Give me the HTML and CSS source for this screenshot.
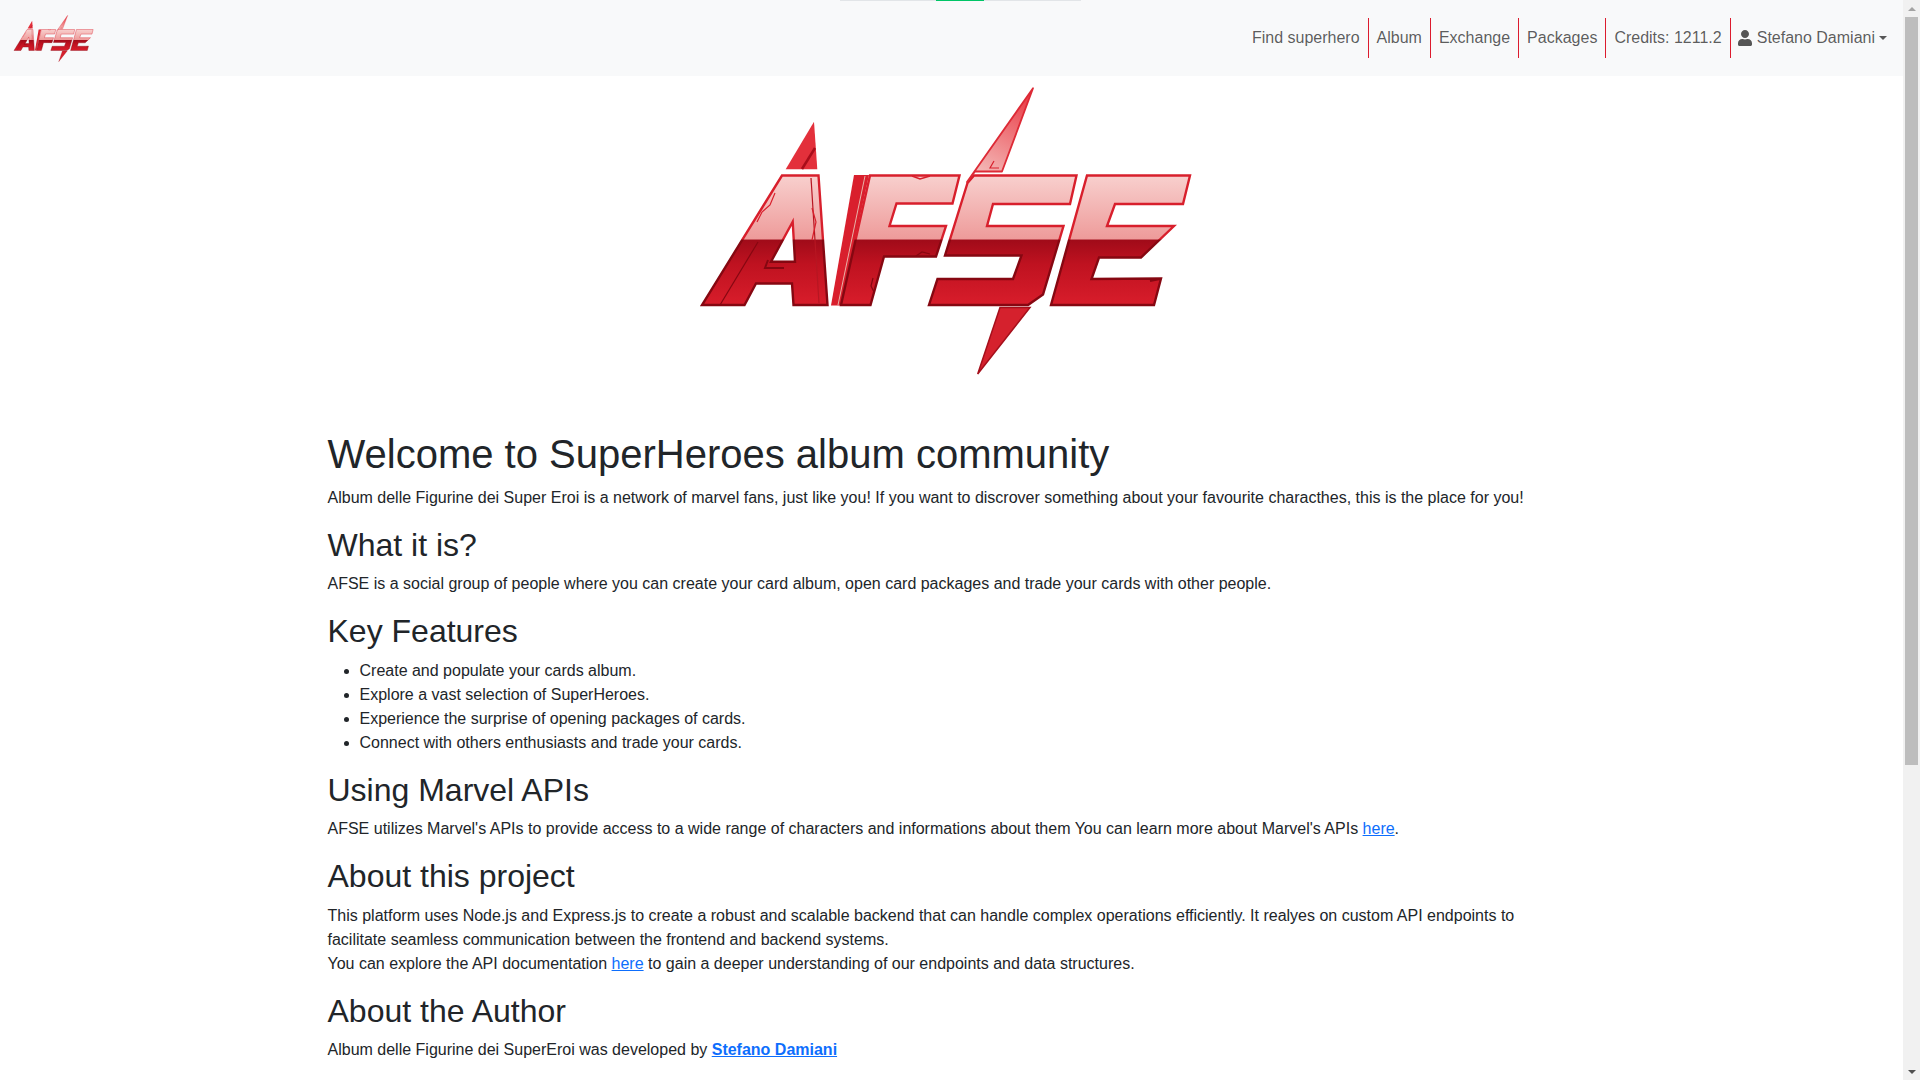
FILE: index.html
```html
<!DOCTYPE html>
<html lang="en">
<head>
<meta charset="utf-8">
<title>AFSE</title>
<link rel="stylesheet" href="styles.css">
</head>
<body>
<svg class="defs" width="0" height="0" aria-hidden="true">
  <defs>
    <linearGradient id="lf" gradientUnits="userSpaceOnUse" x1="0" y1="175" x2="0" y2="306">
      <stop offset="0" stop-color="#f8d0ce"/>
      <stop offset="0.49" stop-color="#ee9b9a"/>
      <stop offset="0.495" stop-color="#a00b19"/>
      <stop offset="0.68" stop-color="#bf1220"/>
      <stop offset="1" stop-color="#d91d2b"/>
    </linearGradient>
    <linearGradient id="ls" gradientUnits="userSpaceOnUse" x1="0" y1="175" x2="0" y2="306">
      <stop offset="0" stop-color="#d81f2c"/>
      <stop offset="0.49" stop-color="#d81f2c"/>
      <stop offset="0.495" stop-color="#860711"/>
      <stop offset="1" stop-color="#860711"/>
    </linearGradient>
    <linearGradient id="lb" gradientUnits="userSpaceOnUse" x1="1030" y1="90" x2="985" y2="172">
      <stop offset="0" stop-color="#e9343f"/>
      <stop offset="1" stop-color="#f3b4b3"/>
    </linearGradient>
    <symbol id="afse" viewBox="698 86 495 290">
      <polygon points="814,121.7 817.3,169.3 785.7,169.3" fill="#e3303b"/>
      <line x1="815" y1="148" x2="802" y2="169" stroke="#a80d1a" stroke-width="2.5"/>
      <path d="M782 175.500H818.500L827.500 305H793.500L792 283.500H756L744.500 305H702ZM792.700 221.700L771 261.700H795Z" fill="url(#lf)" fill-rule="evenodd" stroke="url(#ls)" stroke-width="2.400"/>
      <polygon points="854,175 869,175 841,305.500 831,305.500" fill="#d91f2d"/>
      <line x1="865" y1="176" x2="838" y2="305" stroke="#e7b3a8" stroke-width="1"/>
      <polygon points="870,175.500 959.500,175.500 952.500,203.500 896.500,203.500 889.500,226 946,226 936,256.500 884,256.500 870.500,305 841,305" fill="url(#lf)" stroke="url(#ls)" stroke-width="2.400"/>
      <polygon points="974,175.500 1076.500,175.500 1070,204 993,204 987,226 1063.500,226 1043,294.500 1028,305 929,305 937.500,279 1013,279 1021.500,255.500 945,255.500 967.500,183" fill="url(#lf)" stroke="url(#ls)" stroke-width="2.400"/>
      <polygon points="1087,175.500 1190,175.500 1183,204 1115,204 1107,226 1174,226 1141,257.500 1099,257.500 1091.500,279 1161,278.500 1154,305 1051,305" fill="url(#lf)" stroke="url(#ls)" stroke-width="2.400"/>
      <polygon points="1033,88.300 1002,171.500 975,171.500 967,182" fill="url(#lb)" stroke="#dd2a36" stroke-width="1.800" stroke-linejoin="round"/>
      <polygon points="1000,307.500 1030,307.500 977.700,374" fill="#d5212d" stroke="#a50f1b" stroke-width="1.500"/>
      <g fill="none" stroke-width="1.200">
        <path d="M758 242L720 305" stroke="#860711"/>
        <path d="M811 178L819 303" stroke="#b71622"/>
        <path d="M775 193L770 205L762 212L757 222" stroke="#d81f2c"/>
        <path d="M812 208L816 222L812 240" stroke="#d81f2c"/>
        <path d="M768 260L765 268H784" stroke="#860711" stroke-width="2"/>
        <path d="M912 176L920 179L930 176" stroke="#d81f2c" stroke-width="1.500"/>
        <path d="M916 256L922 252L930 254" stroke="#860711"/>
        <path d="M873 278L871 286L874 292" stroke="#860711"/>
        <path d="M1160 279L1150 281" stroke="#860711" stroke-width="2"/>
        <path d="M999 168H990L994 161" stroke="#d81f2c"/>
      </g>
    </symbol>
  </defs>
</svg>
<div class="progress-track"><div class="progress-fill"></div></div>
<div class="window">
  <div class="page">
    <nav class="navbar">
      <a class="brand" href="#"><svg class="brand-logo"><use href="#afse"/></svg></a>
      <ul class="nav-list">
        <li class="nav-item"><a class="nav-link" href="#">Find superhero</a></li>
        <li class="nav-item"><a class="nav-link" href="#">Album</a></li>
        <li class="nav-item"><a class="nav-link" href="#">Exchange</a></li>
        <li class="nav-item"><a class="nav-link" href="#">Packages</a></li>
        <li class="nav-item"><a class="nav-link" href="#">Credits: 1211.2</a></li>
        <li class="nav-item nav-item-last">
          <a class="nav-link user-link" href="#">
            <svg class="user-icon" viewBox="0 0 448 512"><path d="M224 256c70.700 0 128-57.300 128-128S294.700 0 224 0 96 57.300 96 128s57.300 128 128 128zm89.600 32h-16.700c-22.200 10.200-46.900 16-72.900 16s-50.600-5.800-72.900-16h-16.700C60.200 288 0 348.200 0 422.400V464c0 26.500 21.500 48 48 48h352c26.500 0 48-21.500 48-48v-41.600c0-74.200-60.200-134.400-134.400-134.400z"/></svg>
            Stefano Damiani<span class="caret"></span>
          </a>
        </li>
      </ul>
    </nav>
    <div class="hero"><svg class="hero-logo"><use href="#afse"/></svg></div>
    <main class="content">
      <h1>Welcome to SuperHeroes album community</h1>
      <p>Album delle Figurine dei Super Eroi is a network of marvel fans, just like you! If you want to discrover something about your favourite characthes, this is the place for you!</p>
      <h2>What it is?</h2>
      <p>AFSE is a social group of people where you can create your card album, open card packages and trade your cards with other people.</p>
      <h2>Key Features</h2>
      <ul>
        <li>Create and populate your cards album.</li>
        <li>Explore a vast selection of SuperHeroes.</li>
        <li>Experience the surprise of opening packages of cards.</li>
        <li>Connect with others enthusiasts and trade your cards.</li>
      </ul>
      <h2>Using Marvel APIs</h2>
      <p>AFSE utilizes Marvel's APIs to provide access to a wide range of characters and informations about them You can learn more about Marvel's APIs <a href="#">here</a>.</p>
      <h2>About this project</h2>
      <p>This platform uses Node.js and Express.js to create a robust and scalable backend that can handle complex operations efficiently. It realyes on custom API endpoints to facilitate seamless communication between the frontend and backend systems.<br>You can explore the API documentation <a href="#">here</a> to gain a deeper understanding of our endpoints and data structures.</p>
      <h2>About the Author</h2>
      <p>Album delle Figurine dei SuperEroi was developed by <a href="#"><strong>Stefano Damiani</strong></a></p>
    </main>
  </div>
  <aside class="scrollbar">
    <div class="sb-button"><span class="sb-up"></span></div>
    <div class="sb-track"><div class="sb-thumb"></div></div>
    <div class="sb-button"><span class="sb-down"></span></div>
  </aside>
</div>
</body>
</html>
```
FILE: styles.css
```css
* { box-sizing: border-box; }
html, body { margin: 0; height: 100%; overflow: hidden; }
body {
  font-family: "Liberation Sans", Arial, sans-serif;
  font-size: 16px;
  line-height: 1.5;
  color: #212529;
  background: #fff;
}
.defs { position: absolute; }
.window { display: flex; height: 100vh; }
.page { flex: 1; min-width: 0; height: 100%; overflow: hidden; }

.progress-track {
  position: absolute;
  top: 0;
  left: 840px;
  width: 241px;
  height: 1px;
  background: #e2e5e8;
}
.progress-fill {
  margin-left: 96px;
  width: 48px;
  height: 1px;
  background: #00c566;
}

.navbar {
  display: flex;
  align-items: center;
  height: 76px;
  padding: 0 8px 0 13px;
  background: #f8f9fa;
}
.brand { display: block; height: 47px; }
.brand-logo { display: block; width: 81px; height: 47px; }
.nav-list {
  display: flex;
  list-style: none;
  margin: 0 0 0 auto;
  padding: 0;
}
.nav-item { border-right: 1px solid #dc1c2e; }
.nav-item-last { border-right: 0; }
.nav-link {
  display: block;
  padding: 8px;
  color: rgba(0, 0, 0, .65);
  text-decoration: none;
}
.user-link { display: flex; align-items: center; }
.user-icon {
  width: 14px;
  height: 16px;
  margin: 0 5px 0 -1px;
  fill: #555;
}
.caret {
  width: 0;
  height: 0;
  margin-left: 4px;
  margin-top: -1px;
  border-top: 4.8px solid;
  border-left: 4.8px solid transparent;
  border-right: 4.8px solid transparent;
}

.hero { padding: 10px 0 54px 698px; }
.hero-logo { display: block; width: 495px; height: 290px; }

.content {
  width: 1320px;
  margin: 0 auto;
  padding: 0 35px 0 36px;
}
h1, h2 {
  margin: 0 0 8px;
  font-weight: 500;
  line-height: 1.2;
}
h1 { font-size: 40px; }
h2 { font-size: 32px; }
p { margin: 0 0 16px; }
.content ul { margin: 0 0 16px; padding-left: 32px; }
.content a { color: #0d6efd; }
strong { font-weight: 700; }

.scrollbar {
  display: flex;
  flex-direction: column;
  width: 17px;
  height: 100%;
  background: #f1f1f1;
}
.sb-button {
  display: flex;
  align-items: center;
  justify-content: center;
  height: 17px;
}
.sb-up, .sb-down {
  width: 0;
  height: 0;
  border-left: 4px solid transparent;
  border-right: 4px solid transparent;
}
.sb-up { border-bottom: 4px solid #a3a3a3; }
.sb-down { border-top: 4px solid #505050; }
.sb-track { flex: 1; padding: 0 2px; }
.sb-thumb { height: 748px; background: #bdbdbd; }
```
